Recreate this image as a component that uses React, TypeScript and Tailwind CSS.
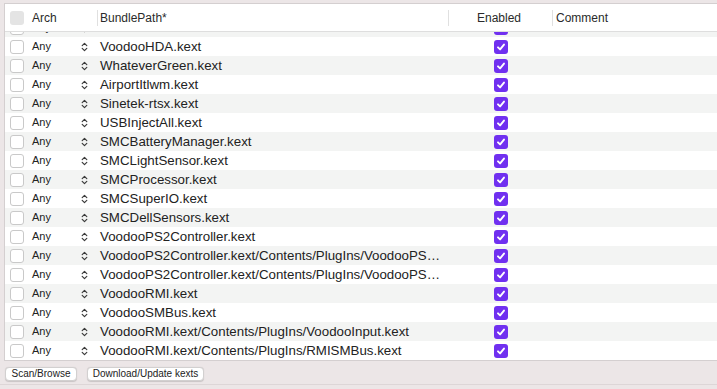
import React from 'react';

const kexts = [
  'RealtekRTL8111.kext',
  'VoodooHDA.kext',
  'WhateverGreen.kext',
  'AirportItlwm.kext',
  'Sinetek-rtsx.kext',
  'USBInjectAll.kext',
  'SMCBatteryManager.kext',
  'SMCLightSensor.kext',
  'SMCProcessor.kext',
  'SMCSuperIO.kext',
  'SMCDellSensors.kext',
  'VoodooPS2Controller.kext',
  'VoodooPS2Controller.kext/Contents/PlugIns/VoodooPS2Keyboard.kext',
  'VoodooPS2Controller.kext/Contents/PlugIns/VoodooPS2Trackpad.kext',
  'VoodooRMI.kext',
  'VoodooSMBus.kext',
  'VoodooRMI.kext/Contents/PlugIns/VoodooInput.kext',
  'VoodooRMI.kext/Contents/PlugIns/RMISMBus.kext',
];

function Stepper() {
  return (
    <svg width="7" height="10" viewBox="0 0 7 10" fill="none" stroke="#3a3a3a" strokeWidth="1.2" strokeLinecap="round" strokeLinejoin="round">
      <path d="M1.2 3.6 L3.5 1.3 L5.8 3.6" />
      <path d="M1.2 6.4 L3.5 8.7 L5.8 6.4" />
    </svg>
  );
}

function Checked() {
  return (
    <div className="w-[14px] h-[14px] rounded-[3px] bg-[#7030f0] flex items-center justify-center">
      <svg width="10" height="10" viewBox="0 0 10 10" fill="none" stroke="white" strokeWidth="1.9" strokeLinecap="round" strokeLinejoin="round">
        <path d="M2 5.3 L4.1 7.4 L8 2.6" />
      </svg>
    </div>
  );
}

function Row({ path, odd, first }: { path: string; odd: boolean; first?: boolean }) {
  return (
    <div
      className={`flex items-center h-[19px] shrink-0 ${odd ? 'bg-[#f3f4f3]' : 'bg-white'} ${first ? 'mt-[-14px]' : ''}`}
    >
      <div className="w-[23px] pl-[5px] flex items-center">
        <div className="w-[14px] h-[14px] rounded-[3px] border border-[#c9c9c9] bg-white" />
      </div>
      <div className="w-[69px] flex items-center">
        <span className="pl-[4px] w-[53px] text-[11px] leading-[14px] text-[#222] -mt-[2px]">Any</span>
        <Stepper />
      </div>
      <div className="w-[351px] pl-[3px] pr-[5px] text-[13.3px] leading-[17px] text-[#222] truncate">{path}</div>
      <div className="w-[104px] flex justify-center pl-[2px]">
        <Checked />
      </div>
      <div className="flex-1" />
    </div>
  );
}

export default function App() {
  return (
    <div
      className="w-[717px] h-[389px] bg-[#ece6e7] pt-[3px] flex flex-col overflow-hidden"
      style={{ fontFamily: '"Liberation Sans", Arial, sans-serif' }}
    >
      <div className="ml-[4px] h-[358px] border-t border-l border-b border-[#d4cfd0] bg-white flex flex-col overflow-hidden">
        {/* header */}
        <div className="h-[28px] shrink-0 flex items-center border-b border-[#dedede] text-[12px] leading-[16px] text-[#2a2a2a]">
          <div className="w-[23px] pl-[5px] flex items-center">
            <div className="w-[14px] h-[14px] rounded-[3px] bg-[#e4e4e4]" />
          </div>
          <div className="w-[69px] pl-[4px]">Arch</div>
          <div className="w-[1px] h-[16px] bg-[#e0e0e0]" />
          <div className="w-[350px] pl-[2px]">BundlePath*</div>
          <div className="w-[1px] h-[16px] bg-[#e0e0e0]" />
          <div className="w-[103px] text-center pr-[3px]">Enabled</div>
          <div className="w-[1px] h-[16px] bg-[#e0e0e0]" />
          <div className="flex-1 pl-[3px]">Comment</div>
        </div>
        {/* rows */}
        <div className="flex-1 flex flex-col overflow-hidden">
          {kexts.map((k, i) => (
            <Row key={k} path={k} odd={i % 2 === 0} first={i === 0} />
          ))}
        </div>
      </div>
      {/* footer */}
      <div className="h-[24px] flex items-start pt-[6px] pl-[5px] gap-[10px] border-b border-[#ddd6d7]">
        <button className="w-[72px] h-[14px] bg-white rounded-[4px] border border-[#d2d0d0] shadow-[0_0.5px_1px_rgba(0,0,0,0.15)] text-[10px] leading-[12px] text-[#222] text-center">
          Scan/Browse
        </button>
        <button className="w-[117px] h-[14px] bg-white rounded-[4px] border border-[#d2d0d0] shadow-[0_0.5px_1px_rgba(0,0,0,0.15)] text-[10px] leading-[12px] text-[#222] text-center">
          Download/Update kexts
        </button>
      </div>
    </div>
  );
}
